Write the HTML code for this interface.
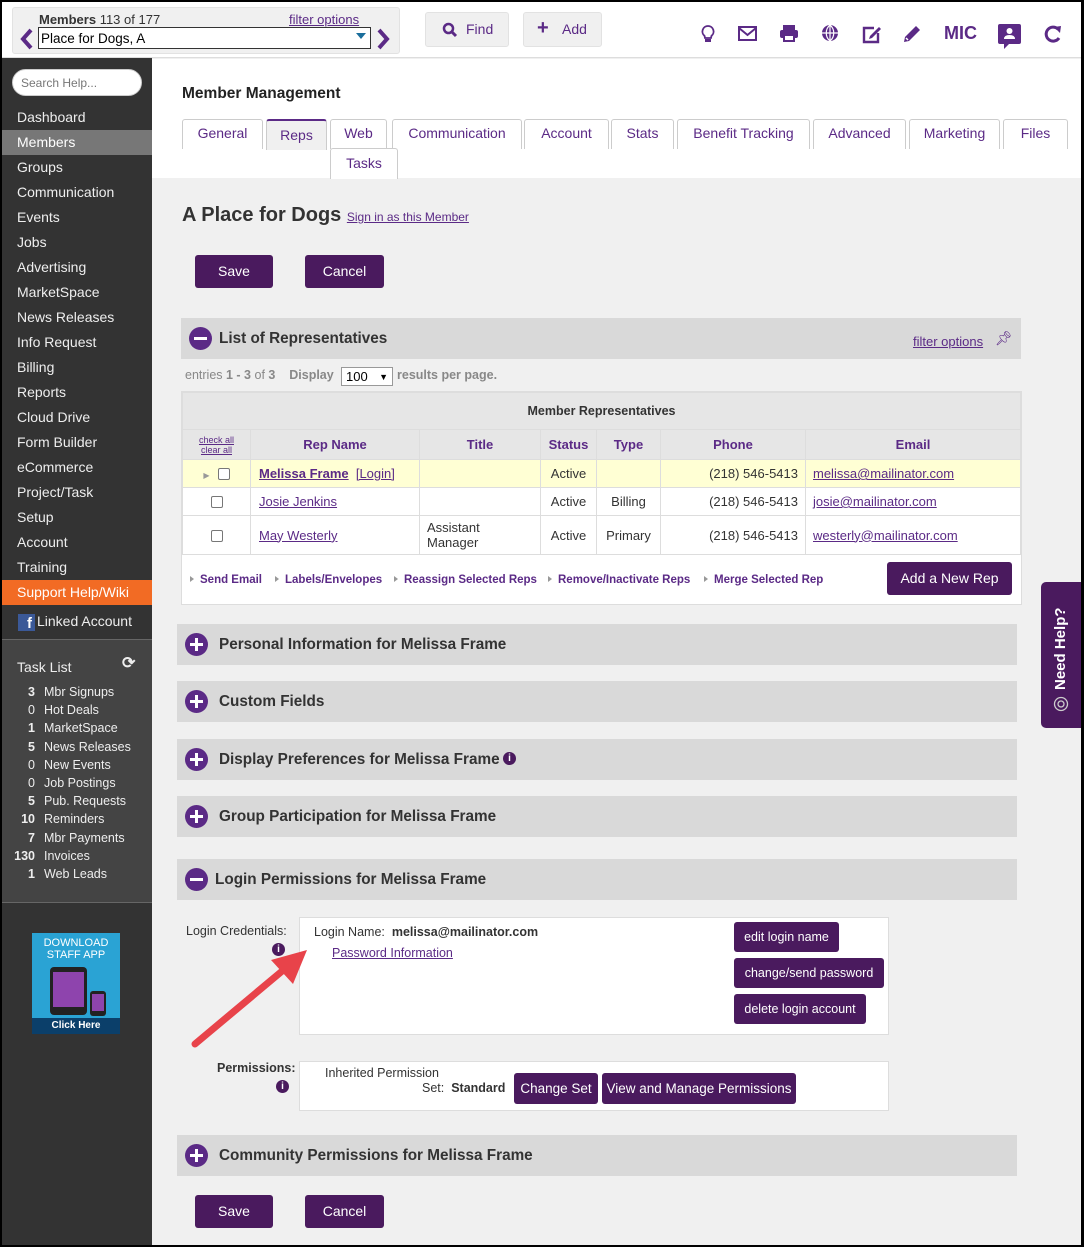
<!DOCTYPE html>
<html><head><meta charset="utf-8"><style>
*{box-sizing:border-box;margin:0;padding:0}
body{width:1084px;height:1247px;position:relative;font-family:"Liberation Sans",sans-serif;font-size:13px;color:#333;background:#000;overflow:hidden}
.a{position:absolute}
#pg{position:absolute;left:2px;top:2px;width:1079px;height:1243px;background:#f0f0f0;overflow:hidden}
.sb{position:absolute;left:0;top:56px;width:150px;height:1190px;background:#333}
.nav{position:absolute;left:15px;color:#eee;font-size:14px}
.tl{position:absolute;color:#eee;font-size:12.5px}
.tl b{display:inline-block;width:31px;text-align:right;margin-right:9px}
.btn{position:absolute;background:#4a1a5e;color:#fff;border-radius:3px;font-size:14px;text-align:center}
.bar{position:absolute;background:#d9d9d9;height:41px}
.bar .c{position:absolute;left:8px;top:9px;width:23px;height:23px;border-radius:50%;background:#5b2a86}
.bar .c:before{content:"";position:absolute;left:5px;top:10px;width:13px;height:3px;background:#fff}
.bar .p:after{content:"";position:absolute;left:10px;top:5px;width:3px;height:13px;background:#fff}
.bar span{position:absolute;left:42px;top:12px;font-size:15.3px;font-weight:bold;color:#333}
.tab{position:absolute;top:117px;height:30px;background:#fff;border:1px solid #ccc;border-bottom:none;border-radius:3px 3px 0 0;color:#5b2a86;font-size:14px;text-align:center;padding-top:5px}
a,.lk{color:#5b2a86;text-decoration:underline}
.ic{position:absolute;top:22px;color:#5b2a86}
td{border:1px solid #ddd;font-size:13px}
.h td{color:#5b2a86;font-weight:bold;text-align:center}
.act{position:absolute;top:572px;font-size:11.5px;color:#5b2a86;font-weight:bold}
.act:before{content:"";display:inline-block;border-left:4px solid #999;border-top:3px solid transparent;border-bottom:3px solid transparent;margin-right:6px;vertical-align:1px}
.cb{display:inline-block;width:12px;height:12px;border:1px solid #777;border-radius:2px;background:#fff;vertical-align:-2px}
.info{position:absolute;width:13px;height:13px;border-radius:50%;background:#4a1a5e;color:#fff;font-size:10px;font-weight:bold;text-align:center;line-height:13px}
</style></head><body><div id="pg">
<!-- top bar -->
<div class="a" style="left:0;top:0;width:1079px;height:56px;background:#fff;border-bottom:1px solid #ddd"></div>
<div class="a" style="left:10px;top:5px;width:388px;height:47px;background:#f0f0f0;border:1px solid #e2e2e2;border-radius:3px"></div>
<div class="a" style="left:37px;top:10px;font-size:13px"><b>Members</b> 113 of 177</div>
<div class="a lk" style="left:287px;top:10px;font-size:13px">filter options</div>
<div class="a" style="left:36px;top:25px;width:333px;height:22px;border:1px solid #333;background:#fff;font-size:13.5px;padding:3px 2px;color:#000">Place for Dogs, A</div>
<div class="a" style="left:354px;top:31px;border-top:6px solid #1a6e9c;border-left:5px solid transparent;border-right:5px solid transparent"></div>
<svg class="a" style="left:18px;top:26px" width="14" height="22"><path d="M11 2 L3 11 L11 20" stroke="#5b2a86" stroke-width="4" fill="none"/></svg>
<svg class="a" style="left:374px;top:26px" width="14" height="22"><path d="M3 2 L11 11 L3 20" stroke="#5b2a86" stroke-width="4" fill="none"/></svg>
<div class="a" style="left:423px;top:10px;width:84px;height:35px;background:#f0f0f0;border:1px solid #e2e2e2;border-radius:3px;color:#5b2a86;font-size:14px;padding:8px 0 0 40px">Find</div>
<svg class="a" style="left:440px;top:20px" width="16" height="16"><circle cx="6.5" cy="6.5" r="4.5" stroke="#5b2a86" stroke-width="2.5" fill="none"/><path d="M10 10 L14 14" stroke="#5b2a86" stroke-width="3"/></svg>
<div class="a" style="left:521px;top:10px;width:79px;height:35px;background:#f0f0f0;border:1px solid #e2e2e2;border-radius:3px;color:#5b2a86;font-size:14px;padding:8px 0 0 38px">Add</div>
<div class="a" style="left:535px;top:15px;color:#5b2a86;font-size:20px;font-weight:bold">+</div>
<svg class="ic" style="left:698px" width="16" height="20"><path d="M8 2 a5.5 5.5 0 0 1 3.5 9.8 L11 14 H5 L4.5 11.8 A5.5 5.5 0 0 1 8 2Z" stroke="#5b2a86" stroke-width="1.8" fill="none"/><rect x="5" y="15" width="6" height="3" fill="#5b2a86"/></svg>
<svg class="ic" style="left:736px;top:24px" width="20" height="16"><rect x="1" y="1" width="17" height="13" stroke="#5b2a86" stroke-width="2" fill="none"/><path d="M1 2 L9.5 9 L18 2" stroke="#5b2a86" stroke-width="2" fill="none"/></svg>
<svg class="ic" style="left:777px" width="20" height="18"><rect x="4" y="1" width="12" height="5" fill="#5b2a86"/><rect x="1" y="6" width="18" height="8" rx="2" fill="#5b2a86"/><rect x="5" y="11" width="10" height="6" fill="#fff" stroke="#5b2a86" stroke-width="2"/></svg>
<svg class="ic" style="left:819px" width="18" height="18"><circle cx="9" cy="9" r="8" fill="#5b2a86"/><path d="M1 9 H17 M9 1 V17 M9 1 C4 5 4 13 9 17 M9 1 C14 5 14 13 9 17" stroke="#fff" stroke-width="1.2" fill="none"/></svg>
<svg class="ic" style="left:860px" width="20" height="20"><path d="M12 4 H2 V18 H16 V9" stroke="#5b2a86" stroke-width="2.4" fill="none"/><path d="M8 12 L17 3 L19 5 L10 14 L7 15Z" fill="#5b2a86"/></svg>
<svg class="ic" style="left:900px" width="20" height="20"><path d="M2 18 L3 13 L14 2 L18 6 L7 17Z" fill="#5b2a86"/><path d="M4 14 L6 16" stroke="#fff" stroke-width="1.5"/></svg>
<div class="a" style="left:942px;top:21px;color:#5b2a86;font-size:18px;font-weight:bold">MIC</div>
<svg class="a" style="left:995px;top:21px" width="28" height="28"><path d="M1 3 Q1 1 3 1 H22 Q24 1 24 3 V19 Q24 21 22 21 H12 L7 26 V21 H3 Q1 21 1 19Z" fill="#5b2a86"/><circle cx="12.5" cy="8" r="3" fill="#fff"/><path d="M7 16 Q7 12 12.5 12 Q18 12 18 16Z" fill="#fff"/></svg>
<svg class="ic" style="left:1041px" width="20" height="20"><path d="M15 5 A7 7 0 1 0 16 14" stroke="#5b2a86" stroke-width="3" fill="none"/><path d="M11 3 L18 2 L17 9Z" fill="#5b2a86"/></svg>
<!-- white header area -->
<div class="a" style="left:150px;top:57px;width:929px;height:119px;background:#fff"></div>
<div class="a" style="left:180px;top:83px;font-size:15.5px;font-weight:bold;color:#222">Member Management</div>
<div class="tab" style="left:180px;width:81px">General</div>
<div class="tab" style="left:264px;width:61px;background:#f0f0f0;border-top:2px solid #5b2a86;top:117px;height:31px;padding-top:6px">Reps</div>
<div class="tab" style="left:328px;width:57px">Web</div>
<div class="tab" style="left:390px;width:130px">Communication</div>
<div class="tab" style="left:522px;width:85px">Account</div>
<div class="tab" style="left:609px;width:63px">Stats</div>
<div class="tab" style="left:675px;width:133px">Benefit Tracking</div>
<div class="tab" style="left:811px;width:93px">Advanced</div>
<div class="tab" style="left:907px;width:91px">Marketing</div>
<div class="tab" style="left:1001px;width:65px">Files</div>
<div class="tab" style="left:328px;top:146px;width:68px;height:31px;padding-top:6px">Tasks</div>
<!-- sidebar -->
<div class="sb"></div>
<div class="a" style="left:10px;top:67px;width:130px;height:27px;border-radius:14px;background:#fff;border:1px solid #ccc;color:#777;font-size:12px;padding:6px 8px">Search Help...</div>
<div class="a" style="left:0;top:128px;width:150px;height:25px;background:#777"></div>
<div class="a" style="left:0;top:578px;width:150px;height:25px;background:#f26b24"></div>
<div class="nav" style="top:107px">Dashboard</div><div class="nav" style="top:132px;color:#fff">Members</div>
<div class="nav" style="top:157px">Groups</div><div class="nav" style="top:182px">Communication</div>
<div class="nav" style="top:207px">Events</div><div class="nav" style="top:232px">Jobs</div>
<div class="nav" style="top:257px">Advertising</div><div class="nav" style="top:282px">MarketSpace</div>
<div class="nav" style="top:307px">News Releases</div><div class="nav" style="top:332px">Info Request</div>
<div class="nav" style="top:357px">Billing</div><div class="nav" style="top:382px">Reports</div>
<div class="nav" style="top:407px">Cloud Drive</div><div class="nav" style="top:432px">Form Builder</div>
<div class="nav" style="top:457px">eCommerce</div><div class="nav" style="top:482px">Project/Task</div>
<div class="nav" style="top:507px">Setup</div><div class="nav" style="top:532px">Account</div>
<div class="nav" style="top:557px">Training</div><div class="nav" style="top:582px;color:#fff">Support Help/Wiki</div>
<div class="a" style="left:16px;top:612px;width:17px;height:17px;background:#3b5998;color:#fff;font-weight:bold;font-size:15px;text-align:right;padding-right:3px;line-height:19px">f</div>
<div class="nav" style="top:611px;left:35px">Linked Account</div>
<div class="a" style="left:0;top:637px;width:150px;height:264px;background:#444;border-top:1px solid #666;border-bottom:1px solid #666"></div>
<div class="nav" style="top:657px;font-size:14px">Task List</div>
<div class="a" style="left:120px;top:651px;color:#eee;font-size:16px;font-weight:bold">⟳</div>
<div class="tl" style="left:2px;top:683px"><b>3</b>Mbr Signups</div>
<div class="tl" style="left:2px;top:701px"><b style="font-weight:normal">0</b>Hot Deals</div>
<div class="tl" style="left:2px;top:719px"><b>1</b>MarketSpace</div>
<div class="tl" style="left:2px;top:738px"><b>5</b>News Releases</div>
<div class="tl" style="left:2px;top:756px"><b style="font-weight:normal">0</b>New Events</div>
<div class="tl" style="left:2px;top:774px"><b style="font-weight:normal">0</b>Job Postings</div>
<div class="tl" style="left:2px;top:792px"><b>5</b>Pub. Requests</div>
<div class="tl" style="left:2px;top:810px"><b>10</b>Reminders</div>
<div class="tl" style="left:2px;top:829px"><b>7</b>Mbr Payments</div>
<div class="tl" style="left:2px;top:847px"><b>130</b>Invoices</div>
<div class="tl" style="left:2px;top:865px"><b>1</b>Web Leads</div>
<div class="a" style="left:30px;top:931px;width:88px;height:101px;background:#2aa3d4"></div>
<div class="a" style="left:30px;top:1016px;width:88px;height:16px;background:#0b3f6a;color:#fff;font-size:10px;font-weight:bold;text-align:center;line-height:16px">Click Here</div>
<div class="a" style="left:30px;top:935px;width:88px;color:#fff;font-size:11px;text-align:center;line-height:12px">DOWNLOAD<br>STAFF APP</div>
<div class="a" style="left:48px;top:965px;width:37px;height:48px;background:#222;border-radius:4px"></div>
<div class="a" style="left:51px;top:970px;width:31px;height:35px;background:#8e44ad"></div>
<div class="a" style="left:88px;top:989px;width:16px;height:25px;background:#222;border-radius:3px"></div>
<div class="a" style="left:90px;top:992px;width:12px;height:17px;background:#8e44ad"></div>
<!-- content -->
<div class="a" style="left:180px;top:202px;font-size:20px;font-weight:bold;color:#333">A Place for Dogs <a style="font-size:12px;font-weight:normal">Sign in as this Member</a></div>
<div class="btn" style="left:193px;top:253px;width:78px;height:33px;line-height:33px">Save</div>
<div class="btn" style="left:303px;top:253px;width:79px;height:33px;line-height:33px">Cancel</div>
<div class="bar" style="left:179px;top:316px;width:840px"><div class="c"></div><span style="left:38px">List of Representatives</span>
<a style="position:absolute;left:732px;top:16px;font-size:13px">filter options</a><div style="position:absolute;left:814px;top:12px;color:#5b2a86;font-size:14px">📌︎</div></div>
<div class="a" style="left:183px;top:366px;font-size:12.5px;color:#888">entries <b>1 - 3</b> of <b>3</b> &nbsp;&nbsp; <b>Display</b></div>
<div class="a" style="left:339px;top:365px;width:52px;height:19px;border:1px solid #999;background:#fff;font-size:13px;padding:1px 4px;color:#000">100 <span style="float:right;font-size:9px;margin-top:3px">▼</span></div>
<div class="a" style="left:395px;top:366px;font-size:12.5px;color:#888;font-weight:bold">results per page.</div>
<div class="a" style="left:179px;top:389px;width:841px;height:214px;background:#fff;border:1px solid #ddd"></div>
<table class="a" style="left:180px;top:390px;width:839px;border-collapse:collapse">
<tr><td colspan="7" style="height:37px;background:#e6e6e6;text-align:center;font-weight:bold;font-size:12.5px;color:#333">Member Representatives</td></tr>
<tr class="h" style="background:#e6e6e6"><td style="width:68px;height:30px;font-size:9px;font-weight:normal;line-height:10px"><span class="lk">check all</span><br><span class="lk">clear all</span></td><td style="width:169px">Rep Name</td><td style="width:121px">Title</td><td style="width:56px">Status</td><td style="width:64px">Type</td><td style="width:145px">Phone</td><td>Email</td></tr>
<tr style="background:#ffffd4"><td style="height:28px;text-align:center"><span style="color:#999;font-size:8px;margin-right:8px">▶</span><span class="cb"></span></td><td style="padding-left:8px"><b class="lk">Melissa Frame</b> &nbsp;<span class="lk">[Login]</span></td><td></td><td style="text-align:center">Active</td><td></td><td style="text-align:right;padding-right:7px">(218) 546-5413</td><td style="padding-left:7px"><span class="lk">melissa@mailinator.com</span></td></tr>
<tr><td style="height:28px;text-align:center"><span class="cb"></span></td><td style="padding-left:8px"><span class="lk">Josie Jenkins</span></td><td></td><td style="text-align:center">Active</td><td style="text-align:center">Billing</td><td style="text-align:right;padding-right:7px">(218) 546-5413</td><td style="padding-left:7px"><span class="lk">josie@mailinator.com</span></td></tr>
<tr><td style="height:39px;text-align:center"><span class="cb"></span></td><td style="padding-left:8px"><span class="lk">May Westerly</span></td><td style="padding-left:7px;line-height:15px">Assistant<br>Manager</td><td style="text-align:center">Active</td><td style="text-align:center">Primary</td><td style="text-align:right;padding-right:7px">(218) 546-5413</td><td style="padding-left:7px"><span class="lk">westerly@mailinator.com</span></td></tr>
</table>
<div class="act" style="left:188px">Send Email</div><div class="act" style="left:273px">Labels/Envelopes</div>
<div class="act" style="left:392px">Reassign Selected Reps</div><div class="act" style="left:546px">Remove/Inactivate Reps</div>
<div class="act" style="left:702px">Merge Selected Rep</div>
<div class="btn" style="left:885px;top:560px;width:125px;height:33px;line-height:33px">Add a New Rep</div>
<div class="bar" style="left:175px;top:622px;width:840px"><div class="c p"></div><span>Personal Information for Melissa Frame</span></div>
<div class="bar" style="left:175px;top:679px;width:840px"><div class="c p"></div><span>Custom Fields</span></div>
<div class="bar" style="left:175px;top:737px;width:840px"><div class="c p"></div><span>Display Preferences for Melissa Frame</span><div class="info" style="left:326px;top:13px">i</div></div>
<div class="bar" style="left:175px;top:794px;width:840px"><div class="c p"></div><span>Group Participation for Melissa Frame</span></div>
<div class="bar" style="left:175px;top:857px;width:840px"><div class="c"></div><span style="left:38px">Login Permissions for Melissa Frame</span></div>
<div class="a" style="left:184px;top:922px;font-size:12.5px;color:#333">Login Credentials:</div>
<div class="info" style="left:270px;top:941px">i</div>
<div class="a" style="left:297px;top:915px;width:590px;height:118px;background:#fff;border:1px solid #ddd"></div>
<div class="a" style="left:312px;top:923px;font-size:12.5px">Login Name: &nbsp;<b>melissa@mailinator.com</b></div>
<div class="a lk" style="left:330px;top:944px;font-size:12.5px">Password Information</div>
<div class="btn" style="left:732px;top:920px;width:105px;height:30px;line-height:30px;font-size:12.5px">edit login name</div>
<div class="btn" style="left:732px;top:956px;width:150px;height:30px;line-height:30px;font-size:12.5px">change/send password</div>
<div class="btn" style="left:732px;top:992px;width:132px;height:30px;line-height:30px;font-size:12.5px">delete login account</div>
<div class="a" style="left:215px;top:1059px;font-size:12.5px;font-weight:bold">Permissions:</div>
<div class="info" style="left:274px;top:1078px">i</div>
<div class="a" style="left:297px;top:1059px;width:590px;height:50px;background:#fff;border:1px solid #ddd"></div>
<div class="a" style="left:323px;top:1064px;font-size:12.5px">Inherited Permission</div>
<div class="a" style="left:420px;top:1079px;font-size:12.5px">Set: &nbsp;<b>Standard</b></div>
<div class="btn" style="left:512px;top:1071px;width:84px;height:31px;line-height:31px;font-size:13.5px">Change Set</div>
<div class="btn" style="left:600px;top:1071px;width:194px;height:31px;line-height:31px;font-size:13.5px">View and Manage Permissions</div>
<svg class="a" style="left:185px;top:940px" width="130" height="110"><path d="M8 102 L100 25" stroke="#e8434a" stroke-width="7" stroke-linecap="round"/><path d="M120 8 L84 18 L106 42Z" fill="#e8434a"/></svg>
<div class="bar" style="left:175px;top:1133px;width:840px"><div class="c p"></div><span>Community Permissions for Melissa Frame</span></div>
<div class="btn" style="left:193px;top:1193px;width:78px;height:33px;line-height:33px">Save</div>
<div class="btn" style="left:303px;top:1193px;width:79px;height:33px;line-height:33px">Cancel</div>
<!-- need help -->
<div class="a" style="left:1039px;top:580px;width:42px;height:146px;background:#4a1a5e;border-radius:5px 0 0 5px"></div>
<div class="a" style="width:146px;color:#fff;font-weight:bold;font-size:15px;transform:rotate(-90deg);transform-origin:0 0;left:1050px;top:688px;white-space:nowrap">Need Help?</div>
<svg class="a" style="left:1051px;top:694px" width="16" height="16"><circle cx="8" cy="8" r="6.5" stroke="#ccc" stroke-width="1.3" fill="none"/><circle cx="8" cy="8" r="3" stroke="#ccc" stroke-width="1.3" fill="none"/></svg>
</div></body></html>
